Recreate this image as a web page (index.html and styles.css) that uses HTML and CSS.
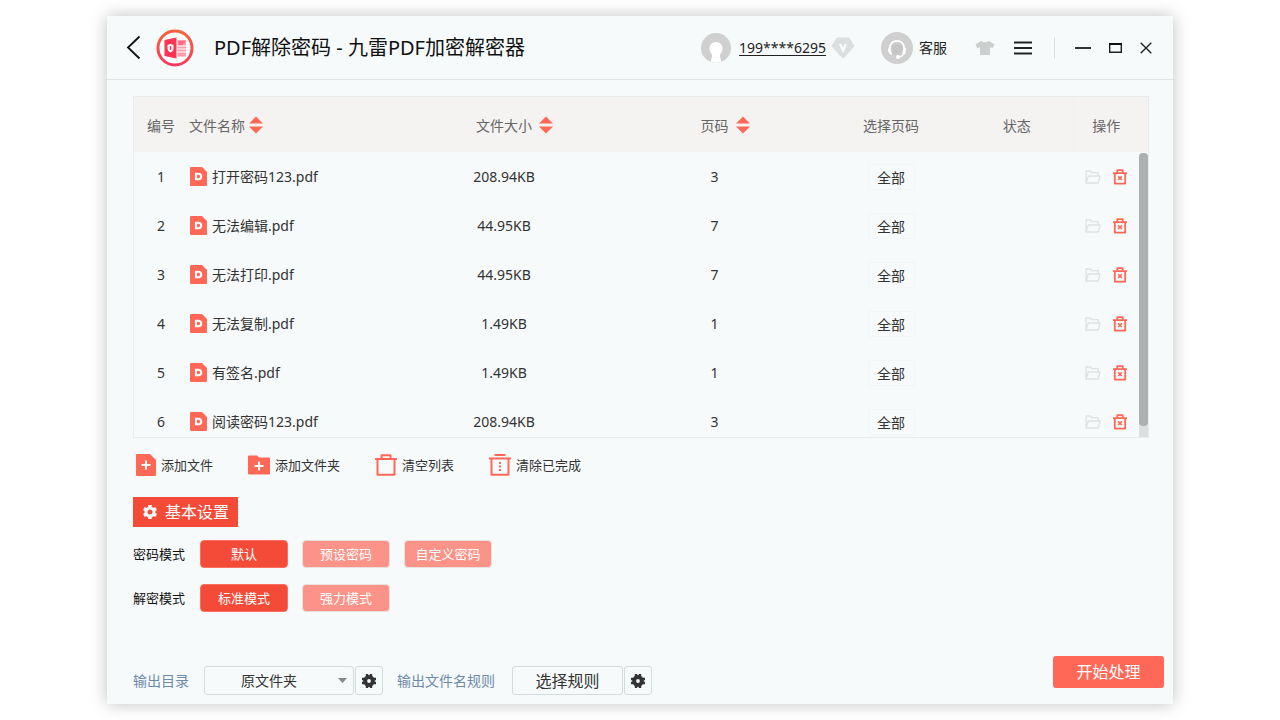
FILE: index.html
```
<!DOCTYPE html>
<html lang="zh-CN">
<head>
<meta charset="utf-8">
<title>PDF解除密码 - 九雷PDF加密解密器</title>
<link rel="stylesheet" href="styles.css">
</head>
<body>
<svg class="sprite" aria-hidden="true">
  <defs>
    <linearGradient id="ring" x1="0" y1="0" x2="0" y2="1"><stop offset="0" stop-color="#f6643c"/><stop offset="1" stop-color="#f93a5c"/></linearGradient>
    <symbol id="sort" viewBox="0 0 14 18"><path d="M7 0.500L14 7.500H0zM7 17.500L0 10.500H14z" fill="#ff6857"/></symbol>
    <symbol id="doc" viewBox="0 0 17 19"><path d="M1 0H12L17 5V18a1 1 0 0 1-1 1H1a1 1 0 0 1-1-1V1a1 1 0 0 1 1-1z" fill="#ff6857"/><path d="M6 6.800H8.500a2.700 2.700 0 0 1 0 5.400H6z" fill="none" stroke="#fff" stroke-width="2.100"/></symbol>
    <symbol id="folder" viewBox="0 0 16 14"><path d="M1 13V1.500Q1 1 1.500 1H5.500L7 2.700H13.200V5.200M1 13L3.300 6H15L13.300 13z" fill="none" stroke="#dfe2e2" stroke-width="1.300" stroke-linejoin="round"/></symbol>
    <symbol id="trash" viewBox="0 0 14 16"><path d="M0 4.200H14M4.300 4V1.200H9.700V4M1.800 4V14.600H12.200V4" fill="none" stroke="#ff6857" stroke-width="1.800" stroke-linejoin="round"/><path d="M5.200 7.400L8.800 11M8.800 7.400L5.200 11" stroke="#ff6857" stroke-width="1.600"/></symbol>
  </defs>
</svg>
<div class="window">
  <header class="titlebar">
    <button class="icon-btn back" aria-label="返回"><svg width="15" height="26" viewBox="0 0 15 26"><path d="M13.500 1.500L2 12.500L13.500 23.500" fill="none" stroke="#111" stroke-width="1.800"/></svg></button>
    <svg class="logo" width="38" height="38" viewBox="0 0 38 38"><circle cx="19" cy="19" r="17" fill="#fff" stroke="url(#ring)" stroke-width="3"/><path d="M8.500 11L20.500 8.500V29.500L8.500 27z" fill="#fb3553"/><path d="M21.500 11H30V27.500H21.500z" fill="#ff9cab"/><path d="M21.500 17H30M21.500 20H30M21.500 23H30" stroke="#fff" stroke-width="1"/><path d="M22.500 13H29M22.500 15H27" stroke="#fb3553" stroke-width="1.200"/><path d="M11.500 16L14.500 15L17.500 16V19Q17.500 22 14.500 23.500Q11.500 22 11.500 19z" fill="#fff"/><path d="M14.500 17V21" stroke="#fb3553" stroke-width="1.400"/></svg>
    <h1 class="title">PDF解除密码 - 九雷PDF加密解密器</h1>
    <div class="account">
      <svg width="30" height="30" viewBox="0 0 30 30"><circle cx="15" cy="15" r="15" fill="#d0d0d0"/><path d="M15 9C19 9 21.500 12 21.500 15.500C21.500 18.500 20.500 20 19 21.500V24Q20 27 20.500 29L15 30L9.500 29Q10 27 11 24V21.500C9.500 20 8.500 18.500 8.500 15.500C8.500 12 11 9 15 9z" fill="#fff"/></svg>
      <a class="phone" href="#">199****6295</a>
      <svg class="vip" width="24" height="22" viewBox="0 0 24 22"><path d="M6 1H18L23 9L13 20.500Q12 21.500 11 20.500L1 9z" fill="#dcdfdf" stroke="#dcdfdf" stroke-linejoin="round"/><path d="M9 7L12 13.500L15 7" fill="none" stroke="#fff" stroke-width="2"/></svg>
    </div>
    <a class="service" href="#">
      <svg width="32" height="32" viewBox="0 0 32 32"><circle cx="16" cy="16" r="16" fill="#cfcfcf"/><path d="M10.500 14Q16 9.500 21.500 14Q23 21 18 23H14Q9 21 10.500 14z" fill="#c6c6c6"/><path d="M9 16C8.500 6.500 23.500 6.500 23 16M24 20Q22.500 24 18 25" fill="none" stroke="#fff" stroke-width="1.600"/><path d="M7.500 15.500H9.500L11 22.500H9.500Q6 20 7.500 15.500zM24.500 15.500H22.500L21 22.500H22.500Q26 20 24.500 15.500z" fill="#fff"/><circle cx="17" cy="25" r="2" fill="#fff"/></svg>
      <span>客服</span>
    </a>
    <button class="icon-btn shirt" aria-label="换肤"><svg width="20" height="16" viewBox="0 0 20 16"><path d="M6 1Q10 3.500 14 1L19.500 4.500L17.500 8.500L15 7V14.500Q15 15 14.500 15H5.500Q5 15 5 14.500V7L2.500 8.500L0.500 4.500z" fill="#cdcfcf"/></svg></button>
    <button class="icon-btn menu" aria-label="菜单"><svg width="18" height="14" viewBox="0 0 18 14"><path d="M0 1.500H18M0 7H18M0 12.500H18" stroke="#222" stroke-width="1.800"/></svg></button>
    <span class="separator"></span>
    <div class="controls">
      <button class="icon-btn" aria-label="最小化"><svg width="16" height="14" viewBox="0 0 16 14"><path d="M0 7H16" stroke="#333" stroke-width="2"/></svg></button>
      <button class="icon-btn" aria-label="最大化"><svg width="13" height="14" viewBox="0 0 13 14"><path d="M0.700 3V11.300H12.300V3" fill="none" stroke="#222" stroke-width="1.400"/><path d="M0 3H13" stroke="#111" stroke-width="2"/></svg></button>
      <button class="icon-btn" aria-label="关闭"><svg width="12" height="14" viewBox="0 0 12 14"><path d="M0.700 1.700L11.300 12.300M11.300 1.700L0.700 12.300" stroke="#222" stroke-width="1.400"/></svg></button>
    </div>
  </header>

  <main class="main">
    <section class="list">
      <table class="files">
        <colgroup><col class="c-no"><col><col class="c-size"><col class="c-page"><col class="c-range"><col class="c-state"><col class="c-action"><col class="c-bar"></colgroup>
        <thead>
          <tr>
            <th>编号</th>
            <th class="name"><div class="cell">文件名称<button class="icon-btn sort" aria-label="按名称排序"><svg width="14" height="18"><use href="#sort"/></svg></button></div></th>
            <th class="sortable"><div class="cell">文件大小<button class="icon-btn sort wide" aria-label="按大小排序"><svg width="14" height="18"><use href="#sort"/></svg></button></div></th>
            <th class="sortable"><div class="cell">页码<button class="icon-btn sort wide" aria-label="按页码排序"><svg width="14" height="18"><use href="#sort"/></svg></button></div></th>
            <th>选择页码</th><th>状态</th><th class="last">操作</th><th></th>
          </tr>
        </thead>
        <tbody>
          <tr><td>1</td><td><div class="cell file"><svg width="17" height="19"><use href="#doc"/></svg>打开密码123.pdf</div></td><td>208.94KB</td><td>3</td><td><button class="range">全部</button></td><td></td><td><div class="actions"><button class="icon-btn" aria-label="打开文件夹"><svg width="16" height="14"><use href="#folder"/></svg></button><button class="icon-btn" aria-label="删除"><svg width="14" height="16"><use href="#trash"/></svg></button></div></td><td></td></tr>
          <tr><td>2</td><td><div class="cell file"><svg width="17" height="19"><use href="#doc"/></svg>无法编辑.pdf</div></td><td>44.95KB</td><td>7</td><td><button class="range">全部</button></td><td></td><td><div class="actions"><button class="icon-btn" aria-label="打开文件夹"><svg width="16" height="14"><use href="#folder"/></svg></button><button class="icon-btn" aria-label="删除"><svg width="14" height="16"><use href="#trash"/></svg></button></div></td><td></td></tr>
          <tr><td>3</td><td><div class="cell file"><svg width="17" height="19"><use href="#doc"/></svg>无法打印.pdf</div></td><td>44.95KB</td><td>7</td><td><button class="range">全部</button></td><td></td><td><div class="actions"><button class="icon-btn" aria-label="打开文件夹"><svg width="16" height="14"><use href="#folder"/></svg></button><button class="icon-btn" aria-label="删除"><svg width="14" height="16"><use href="#trash"/></svg></button></div></td><td></td></tr>
          <tr><td>4</td><td><div class="cell file"><svg width="17" height="19"><use href="#doc"/></svg>无法复制.pdf</div></td><td>1.49KB</td><td>1</td><td><button class="range">全部</button></td><td></td><td><div class="actions"><button class="icon-btn" aria-label="打开文件夹"><svg width="16" height="14"><use href="#folder"/></svg></button><button class="icon-btn" aria-label="删除"><svg width="14" height="16"><use href="#trash"/></svg></button></div></td><td></td></tr>
          <tr><td>5</td><td><div class="cell file"><svg width="17" height="19"><use href="#doc"/></svg>有签名.pdf</div></td><td>1.49KB</td><td>1</td><td><button class="range">全部</button></td><td></td><td><div class="actions"><button class="icon-btn" aria-label="打开文件夹"><svg width="16" height="14"><use href="#folder"/></svg></button><button class="icon-btn" aria-label="删除"><svg width="14" height="16"><use href="#trash"/></svg></button></div></td><td></td></tr>
          <tr><td>6</td><td><div class="cell file"><svg width="17" height="19"><use href="#doc"/></svg>阅读密码123.pdf</div></td><td>208.94KB</td><td>3</td><td><button class="range">全部</button></td><td></td><td><div class="actions"><button class="icon-btn" aria-label="打开文件夹"><svg width="16" height="14"><use href="#folder"/></svg></button><button class="icon-btn" aria-label="删除"><svg width="14" height="16"><use href="#trash"/></svg></button></div></td><td></td></tr>
        </tbody>
      </table>
      <div class="scrollbar"><div class="thumb"></div></div>
    </section>

    <div class="toolbar">
      <button class="tool"><svg width="20" height="22" viewBox="0 0 20 22"><path d="M1 0H14L20 6V21a1 1 0 0 1-1 1H1a1 1 0 0 1-1-1V1a1 1 0 0 1 1-1z" fill="#ff6857"/><path d="M5.500 11H14.500M10 6.500V15.500" stroke="#fff" stroke-width="2"/></svg>添加文件</button>
      <button class="tool"><svg width="22" height="22" viewBox="0 0 22 22"><path d="M1 1.500H9L11 3.500H21a1 1 0 0 1 1 1V19.500a1 1 0 0 1-1 1H1a1 1 0 0 1-1-1V2.500a1 1 0 0 1 1-1z" fill="#ff6857"/><path d="M6.500 12H15.500M11 7.500V16.500" stroke="#fff" stroke-width="2"/></svg>添加文件夹</button>
      <button class="tool"><svg width="22" height="22" viewBox="0 0 22 22"><path d="M0 5H22M6.500 5V1.200H15.500V5M2.500 5V20.800H19.500V5" fill="none" stroke="#ff6857" stroke-width="2" stroke-linejoin="round"/></svg>清空列表</button>
      <button class="tool"><svg width="22" height="22" viewBox="0 0 22 22"><path d="M5.500 1H16.500M0 4.500H22M2.500 4.500V20.800H19.500V4.500" fill="none" stroke="#ff6857" stroke-width="2" stroke-linejoin="round"/><path d="M11 8V17" stroke="#ff6857" stroke-width="2" stroke-dasharray="2 1.500"/></svg>清除已完成</button>
    </div>

    <h2 class="section-title"><svg width="14" height="14" viewBox="0 0 14 14"><circle cx="7" cy="7" r="4" fill="none" stroke="#fff" stroke-width="3"/><g stroke="#fff" stroke-width="3.400"><path d="M7 0V2.500M7 11.500V14M0.900 3.500L3 4.700M11 9.300L13.100 10.500M0.900 10.500L3 9.300M11 4.700L13.100 3.500"/></g></svg>基本设置</h2>

    <div class="mode"><span class="label">密码模式</span><button class="pill active">默认</button><button class="pill">预设密码</button><button class="pill">自定义密码</button></div>
    <div class="mode"><span class="label">解密模式</span><button class="pill active">标准模式</button><button class="pill">强力模式</button></div>
  </main>

  <footer class="footer">
    <label class="out-label" for="outdir">输出目录</label>
    <div class="select-wrap">
      <select id="outdir" class="box select"><option>原文件夹</option></select>
      <svg class="caret" width="9" height="5" viewBox="0 0 9 5"><path d="M0 0H9L4.500 5z" fill="#888"/></svg>
    </div>
    <button class="box gear" aria-label="目录设置"><svg width="14" height="14" viewBox="0 0 14 14"><circle cx="7" cy="7" r="3.900" fill="none" stroke="#333" stroke-width="4"/><path d="M5 0V2M9 0V2M5 12V14M9 12V14M0 5H2M0 9H2M12 5H14M12 9H14" stroke="#333" stroke-width="2.400"/></svg></button>
    <label class="out-label rule-label" for="rule">输出文件名规则</label>
    <button id="rule" class="box rule">选择规则</button>
    <button class="box gear" aria-label="规则设置"><svg width="14" height="14" viewBox="0 0 14 14"><circle cx="7" cy="7" r="3.900" fill="none" stroke="#333" stroke-width="4"/><path d="M5 0V2M9 0V2M5 12V14M9 12V14M0 5H2M0 9H2M12 5H14M12 9H14" stroke="#333" stroke-width="2.400"/></svg></button>
    <button class="start">开始处理</button>
  </footer>
</div>
</body>
</html>
```
FILE: styles.css
```
* { box-sizing: border-box; }
body {
  margin: 0;
  background: #fff;
  font: 14px/20px "Noto Sans", "Noto Sans CJK SC", sans-serif;
  color: #333;
}
button, select { font: inherit; color: inherit; margin: 0; cursor: pointer; }
svg { display: block; flex: none; }
.sprite { position: absolute; width: 0; height: 0; }
.icon-btn { display: block; padding: 0; border: 0; background: none; flex: none; }

.window {
  display: flex;
  flex-direction: column;
  min-height: calc(100vh - 32px);
  margin: 16px 107px;
  background: #f6fafb;
  box-shadow: 0 0 16px rgba(0, 0, 0, 0.25);
}

.titlebar {
  display: flex;
  align-items: center;
  height: 64px;
  padding: 0 21px 0 19px;
  border-bottom: 1px solid #e1e5e6;
}
.logo { margin-left: 15px; }
.title {
  flex: 1;
  margin: 0 0 0 20px;
  font-size: 20px;
  line-height: 28px;
  font-weight: 400;
  color: #111;
  white-space: nowrap;
}
.account { display: flex; align-items: center; }
.phone { margin-left: 8px; color: #222; text-underline-offset: 2px; }
.vip { margin-left: 5px; }
.service {
  display: flex;
  align-items: center;
  gap: 6px;
  margin-left: 26px;
  color: #222;
  text-decoration: none;
}
.shirt { margin-left: 28px; }
.menu { margin-left: 19px; }
.separator { width: 1px; height: 22px; margin: 0 20px 0 22px; background: #dcdfe0; }
.controls { display: flex; align-items: center; gap: 18px; }

.main { flex: 1; display: flex; flex-direction: column; align-items: flex-start; padding: 16px 24px 0 26px; }
.list {
  position: relative;
  align-self: stretch;
  height: 342px;
  overflow: hidden;
  border: 1px solid #e9ecec;
}
.files { width: 100%; table-layout: fixed; border-collapse: collapse; }
.files th {
  height: 55px;
  padding: 3px 0 0;
  background: #f5f3f2;
  font-weight: 400;
  color: #666;
}
.files th.last { border-left: 1px solid #f2f1f0; }
.files td { height: 49px; padding: 0; text-align: center; }
.files th.name { padding-left: 1px; }
.files th.sortable { padding-left: 21px; }
.cell { display: flex; align-items: center; }
.sortable .cell { justify-content: center; }
.file { gap: 5px; padding-left: 2px; }
.c-no { width: 54px; }
.c-size { width: 208px; }
.c-page { width: 213px; }
.c-range { width: 140px; }
.c-state { width: 112px; }
.c-action { width: 66px; }
.c-bar { width: 9px; }
.sort { margin: 0 0 2px 4px; }
.sort.wide { margin-left: 7px; }
.range {
  width: 47px;
  height: 26px;
  padding: 2px 0 0;
  border: 1px solid #f3f5f6;
  background: #f7fafb;
  line-height: 20px;
}
.actions { display: flex; align-items: center; justify-content: center; gap: 12px; }
.scrollbar { position: absolute; top: 56px; right: 0; bottom: 0; width: 9px; background: #dcdfe0; border-radius: 4px 4px 0 0; }
.thumb { height: 96%; border-radius: 4px; background: #adafb0; }

.toolbar { display: flex; gap: 35px; margin: 15px 0 0 3px; }
.tool {
  display: flex;
  align-items: center;
  gap: 5px;
  height: 24px;
  padding: 0;
  border: 0;
  background: none;
  font-size: 13px;
}
.section-title {
  display: flex;
  align-items: center;
  gap: 8px;
  height: 30px;
  margin: 20px 0 13px;
  padding: 0 9px 0 10px;
  background: #f34b38;
  color: #fff;
  font-size: 16px;
  font-weight: 400;
}
.mode { display: flex; align-items: center; gap: 14px; margin-bottom: 16px; font-size: 13px; color: #111; }
.label { width: 53px; }
.pill {
  width: 88px;
  height: 28px;
  padding: 0;
  border: 1px solid #e9dfe1;
  border-radius: 4px;
  background: #fc9388;
  color: #fff;
}
.pill.active { border-color: #f8705f; background: #f34b38; }

.footer { display: flex; align-items: flex-end; padding: 0 9px 9px 26px; }
.out-label { line-height: 29px; color: #6e8aa9; }
.box {
  height: 29px;
  padding: 0;
  border: 1px solid #d7dadb;
  border-radius: 3px;
  background: #f6fafb;
  color: #333;
}
.select-wrap { position: relative; margin-left: 15px; }
.select { display: block; width: 150px; padding-right: 20px; appearance: none; text-align-last: center; }
.caret { position: absolute; right: 7px; top: 12px; pointer-events: none; }
.gear { display: flex; align-items: center; justify-content: center; width: 28px; margin-left: 1px; }
.rule-label { margin-left: 14px; }
.rule { width: 111px; margin-left: 17px; font-size: 16px; }
.start {
  height: 32px;
  width: 111px;
  margin: 0 0 7px auto;
  padding: 0;
  border: 0;
  border-radius: 3px;
  background: #ff6857;
  color: #fff;
  font-size: 16px;
}
```
